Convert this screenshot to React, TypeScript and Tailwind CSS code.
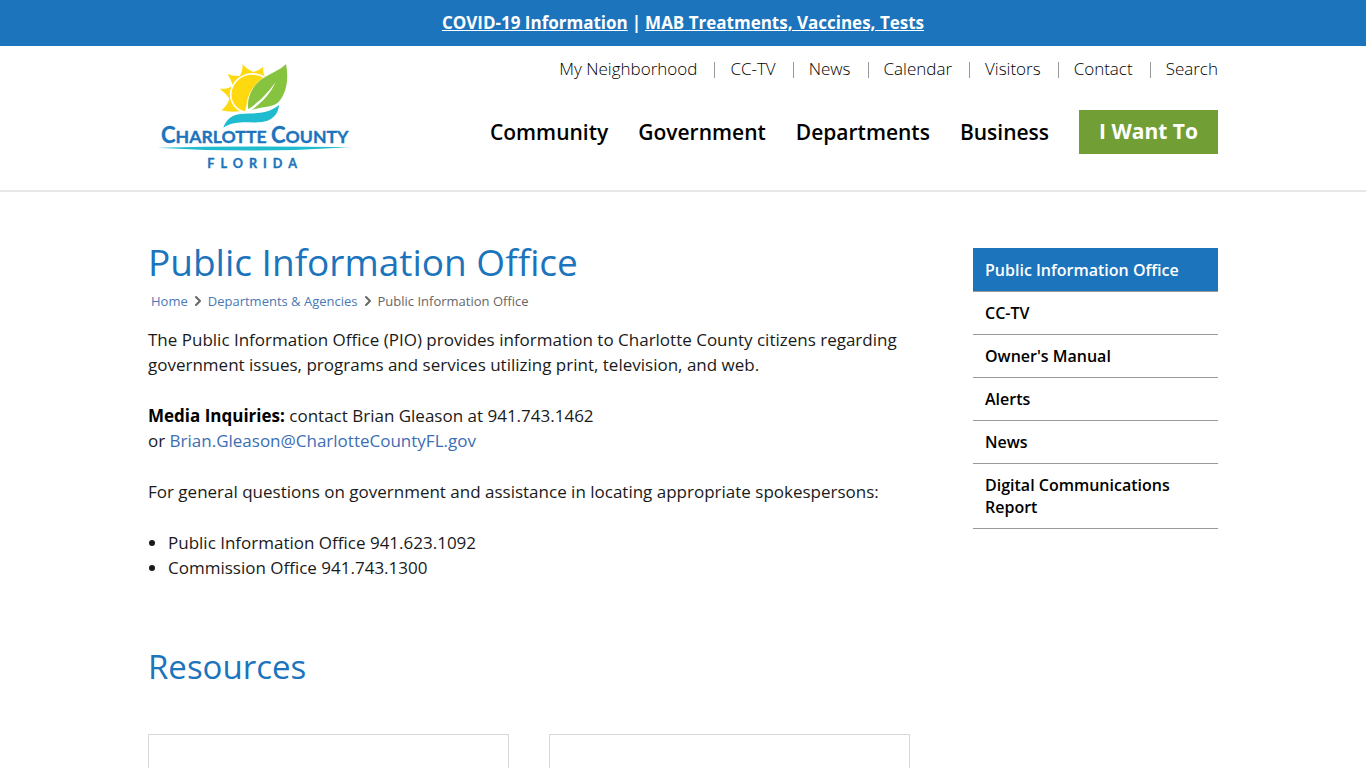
import { ChevronRight } from 'lucide-react';

const topLinks = ['My Neighborhood', 'CC-TV', 'News', 'Calendar', 'Visitors', 'Contact', 'Search'];

const mainLinks = ['Community', 'Government', 'Departments', 'Business'];

const sideLinks = ['CC-TV', "Owner's Manual", 'Alerts', 'News', 'Digital Communications Report'];

const Logo = () => (
  <svg className="block w-[212px] h-[120px]" viewBox="0 0 636 360" role="img" aria-label="Charlotte County Florida">
    {/* Sun */}
    <g fill="#ffd90f">
      <path d="M220 163Q238 150 246 124L275 166Q243 169 220 163Z" />
      <path d="M215 98Q236 101 262 86L248 132Q234 112 215 98Z" />
      <path d="M239 54Q257 63 289 59L256 92Q250 73 239 54Z" />
      <path d="M284 25Q296 40 320 50L306 62L274 62Q284 46 284 25Z" />
      <path d="M346 32Q343 48 352 66L308 60L306 50Q332 45 346 32Z" />
      <path
        stroke="#fff"
        strokeWidth="5"
        d="M292 169C262 162 247 139 248 112C251 80 276 58 305 54C323 52 338 56 350 65C318 88 300 118 298 148C297 156 296 163 292 169Z"
      />
    </g>
    {/* Leaf */}
    <path
      fill="#86c440"
      d="M414 24C422 63 418 110 391 139C370 157 337 151 307 164C334 147 366 116 383 78C355 117 330 139 301 160C296 126 311 91 342 69C371 49 398 42 414 24Z"
    />
    {/* Wave */}
    <path
      fill="#1fbcd0"
      d="M226 215C234 191 252 176 278 174C319 170 355 177 393 147C391 176 372 194 342 198C304 203 267 190 226 215Z"
    />
    <g fill="#1b74bc" stroke="#1b74bc" className="font-['Lato'] font-bold">
      <text x="39" y="262" strokeWidth="1" fontSize="66">
        C<tspan fontSize="53">HARLOTTE </tspan>C<tspan fontSize="53">OUNTY</tspan>
      </text>
      <text x="178" y="335" strokeWidth="1" className="tracking-[18px]" fontSize="38">
        FLORIDA
      </text>
    </g>
    <path fill="#1fbcd0" d="M27 275Q318 269 608 274Q318 293 27 275Z" />
  </svg>
);

const Header = () => (
  <header className="border-b-2 border-[#e7e7e7]">
    <div className="max-w-[1070px] h-36 mx-auto pt-2.5 flex justify-between">
      <a href="#home" className="shrink-0">
        <Logo />
      </a>

      <div className="flex flex-col items-end">
        <nav aria-label="Utility" className="flex items-center h-[26px] text-[17px] font-light">
          {topLinks.map((link, i) => (
            <div key={link} className="flex items-center">
              {i > 0 && <span className="w-px h-4 ml-[17px] mr-[15px] mt-0.5 bg-[#999]" />}
              <a href="#utility">{link}</a>
            </div>
          ))}
        </nav>

        <nav aria-label="Main" className="mt-7 flex items-center gap-[30px] text-[21px] font-semibold">
          {mainLinks.map((link) => (
            <a key={link} href="#main" className="leading-[44px]">
              {link}
            </a>
          ))}
          <button type="button" className="h-11 px-5 bg-[#719f36] text-white font-bold">
            I Want To
          </button>
        </nav>
      </div>
    </div>
  </header>
);

const Breadcrumbs = () => (
  <nav aria-label="Breadcrumb" className="ml-[3px] flex items-center text-[13px] leading-5 text-[#666]">
    <a href="#home" className="text-[#4a78b5]">Home</a>
    <ChevronRight className="w-4 h-4 mx-0.5" strokeWidth={3} />
    <a href="#departments" className="text-[#4a78b5]">Departments &amp; Agencies</a>
    <ChevronRight className="w-4 h-4 mx-0.5" strokeWidth={3} />
    <span>Public Information Office</span>
  </nav>
);

const Sidebar = () => (
  <aside className="w-[245px] shrink-0 mt-14 leading-[22px]">
    <a href="#office" className="block px-3 pt-[11px] pb-2.5 bg-[#1b74bc] border-b border-[#999] text-white font-semibold">
      Public Information Office
    </a>
    <ul>
      {sideLinks.map((link) => (
        <li key={link} className="border-b border-[#999]">
          <a href="#section" className="block px-3 py-2.5 font-semibold">
            {link}
          </a>
        </li>
      ))}
    </ul>
  </aside>
);

const App = () => {
  return (
    <div className="h-screen overflow-hidden bg-white text-black font-['Open_Sans',sans-serif]">
      <div className="h-[46px] flex items-center justify-center gap-1 bg-[#1b74bc] text-white text-[17px] font-bold">
        <a href="#covid" className="underline">COVID-19 Information</a>
        <span>|</span>
        <a href="#treatments" className="underline">MAB Treatments, Vaccines, Tests</a>
      </div>

      <Header />

      <div className="max-w-[1070px] mx-auto flex gap-[63px]">
        <main className="flex-1 min-w-0 pt-[41px]">
          <h1 className="text-[37px] leading-[58px] text-[#1b74bc]">Public Information Office</h1>
          <Breadcrumbs />

          <div className="mt-4 space-y-[26px] text-[17px] leading-[25px] text-[#1a1a1a]">
            <p>
              The Public Information Office (PIO) provides information to Charlotte County citizens regarding
              government issues, programs and services utilizing print, television, and web.
            </p>
            <p>
              <strong className="font-bold text-black">Media Inquiries:</strong> contact Brian Gleason at 941.743.1462
              <br />
              or <a href="#email" className="text-[#3c6eb4]">Brian.Gleason@CharlotteCountyFL.gov</a>
            </p>
            <p>For general questions on government and assistance in locating appropriate spokespersons:</p>
            <ul className="pl-5 list-disc">
              <li>Public Information Office 941.623.1092</li>
              <li>Commission Office 941.743.1300</li>
            </ul>
          </div>

          <h2 className="mt-[62px] text-[33px] leading-[50px] text-[#1b74bc]">Resources</h2>

          <div className="mt-[42px] grid grid-cols-2 gap-10">
            <div className="h-40 border border-[#d8d8d8]" />
            <div className="h-40 border border-[#d8d8d8]" />
          </div>
        </main>

        <Sidebar />
      </div>
    </div>
  );
};

export default App;
